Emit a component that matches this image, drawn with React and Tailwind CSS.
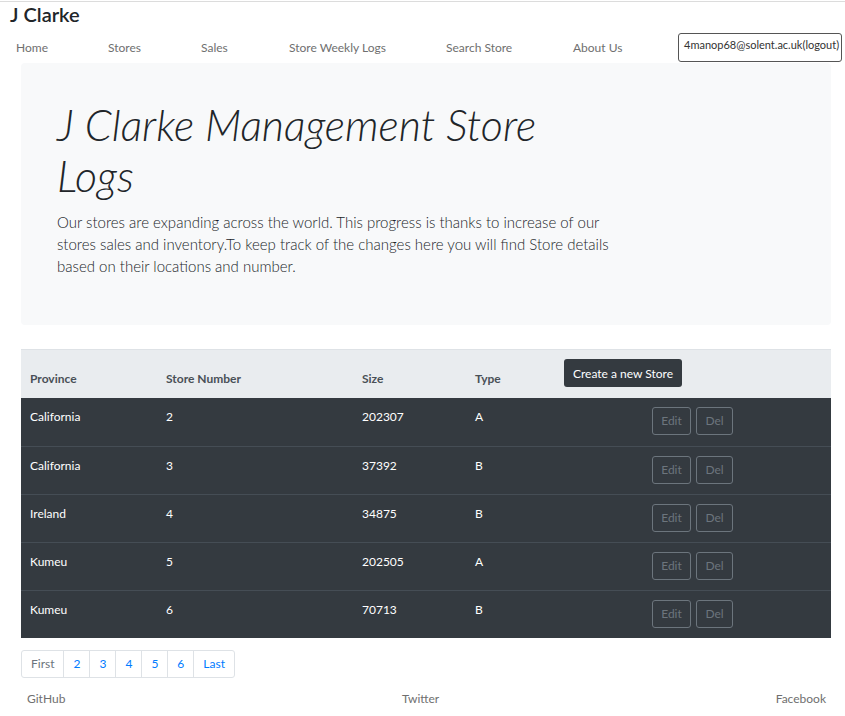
import React from 'react';

const navLinks = [
  { label: 'Home', cls: 'w-[92px]' },
  { label: 'Stores', cls: 'w-[93px]' },
  { label: 'Sales', cls: 'w-[88px]' },
  { label: 'Store Weekly Logs', cls: 'w-[157px]' },
  { label: 'Search Store', cls: 'w-[127px]' },
  { label: 'About Us', cls: 'w-[105px]' },
];

const stores = [
  { province: 'California', number: '2', size: '202307', type: 'A' },
  { province: 'California', number: '3', size: '37392', type: 'B' },
  { province: 'Ireland', number: '4', size: '34875', type: 'B' },
  { province: 'Kumeu', number: '5', size: '202505', type: 'A' },
  { province: 'Kumeu', number: '6', size: '70713', type: 'B' },
];

const pages = ['First', '2', '3', '4', '5', '6', 'Last'];

const App = () => {
  return (
    <div className="min-h-[716px] bg-white text-[#212529] font-['Lato','Segoe_UI',sans-serif]">
      <div className="h-px mt-px bg-[#dcdcdc]" />

      <header>
        <h1 className="pl-[10px] text-[20px] leading-[24px] font-semibold">J Clarke</h1>
        <nav className="flex items-start h-[37px] pt-[7px] pl-[16px] text-[12px] text-[#6f6f6f]">
          {navLinks.map((link) => (
            <a key={link.label} className={`${link.cls} pt-[6px] leading-[18px]`}>
              {link.label}
            </a>
          ))}
          <div className="w-[164px] h-[29px] border border-[#555] rounded-[3px] pt-[3px] pl-[5px] text-[11px] leading-[15px] text-[#333]">
            4manop68@solent.ac.uk(logout)
          </div>
        </nav>
      </header>

      <main className="pl-[21px] pr-[14px]">
        <section className="bg-[#f8f9fa] rounded-[4px] h-[262px] pt-[36px] pl-[36px]">
          <h2 className="text-[43px] leading-[51px] font-light italic whitespace-nowrap">
            J Clarke Management Store
            <br />
            Logs
          </h2>
          <p className="mt-[10px] text-[15px] leading-[22px] font-light whitespace-nowrap">
            Our stores are expanding across the world. This progress is thanks to increase of our
            <br />
            stores sales and inventory.To keep track of the changes here you will find Store details
            <br />
            based on their locations and number.
          </p>
        </section>

        <div className="mt-[24px] text-[12px]">
          <div className="grid grid-cols-[136px_196px_113px_89px_1fr] items-end h-[49px] bg-[#e9ecef] border-t border-[#dee2e6] font-bold text-[#495057]">
            <div className="pl-[9px] pb-[10px] leading-[18px]">Province</div>
            <div className="pl-[9px] pb-[10px] leading-[18px]">Store Number</div>
            <div className="pl-[9px] pb-[10px] leading-[18px]">Size</div>
            <div className="pl-[9px] pb-[10px] leading-[18px]">Type</div>
            <div className="self-start pt-[9px] pl-[9px]">
              <button className="h-[28px] px-[9px] pt-[2px] rounded-[3px] bg-[#343a40] text-white font-normal text-[12px]">
                Create a new Store
              </button>
            </div>
          </div>
          {stores.map((s, i) => (
            <div
              key={s.number}
              className={`grid grid-cols-[136px_196px_113px_89px_1fr] h-[48px] bg-[#343a40] text-white ${
                i === 0 ? '' : 'border-t border-[#454d55]'
              }`}
            >
              <div className="pl-[9px] pt-[10px] leading-[18px]">{s.province}</div>
              <div className="pl-[9px] pt-[10px] leading-[18px]">{s.number}</div>
              <div className="pl-[9px] pt-[10px] leading-[18px]">{s.size}</div>
              <div className="pl-[9px] pt-[10px] leading-[18px]">{s.type}</div>
              <div className="flex gap-[5px] pl-[97px] pt-[9px]">
                <button className="w-[39px] h-[28px] border border-[#6c757d] rounded-[3px] text-[#6c757d] text-[12px]">
                  Edit
                </button>
                <button className="w-[37px] h-[28px] border border-[#6c757d] rounded-[3px] text-[#6c757d] text-[12px]">
                  Del
                </button>
              </div>
            </div>
          ))}
        </div>

        <div className="mt-[12px] inline-flex border border-[#dee2e6] rounded-[3px] text-[12px] h-[28px]">
          {pages.map((p, i) => (
            <a
              key={p}
              className={`flex items-center px-[9px] ${i > 0 ? 'border-l border-[#dee2e6]' : ''} ${
                i === 0 ? 'text-[#6c757d]' : 'text-[#007bff]'
              }`}
            >
              {p}
            </a>
          ))}
        </div>
      </main>

      <footer className="flex justify-between px-[27px] pt-[12px] text-[12px] leading-[18px] text-[#6f6f6f]">
        <a>GitHub</a>
        <a>Twitter</a>
        <a className="-mr-[8px]">Facebook</a>
      </footer>
    </div>
  );
};

export default App;
